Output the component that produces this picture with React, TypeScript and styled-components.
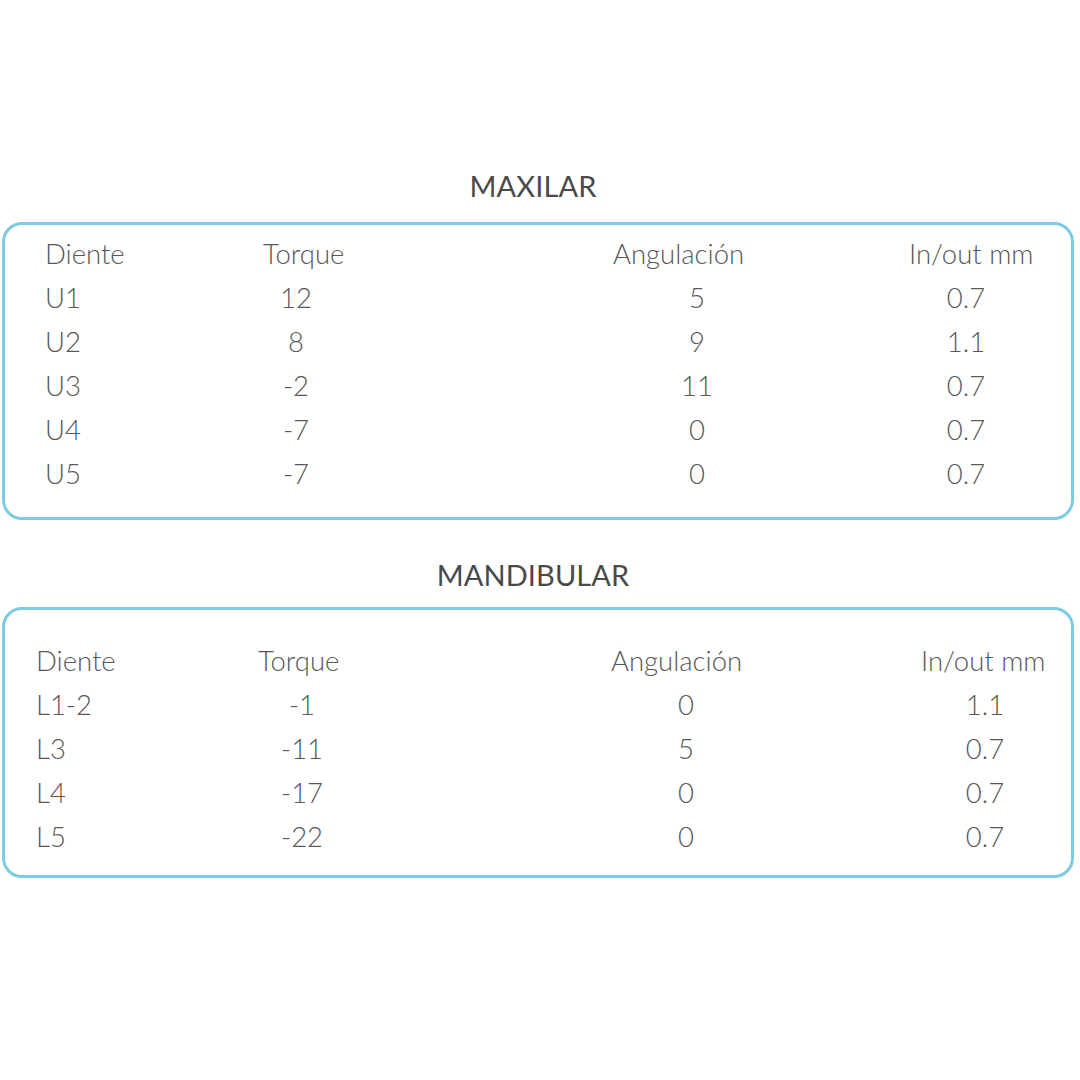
import React from "react";
import styled, { createGlobalStyle } from "styled-components";

const Global = createGlobalStyle`
  html, body { margin: 0; padding: 0; background: #ffffff; }
  body { font-family: Lato, "Open Sans", sans-serif; color: #555555; }
`;

const Page = styled.div`
  width: 1080px;
  height: 1080px;
  box-sizing: border-box;
  padding: 164px 6px 0 2px;
  display: flex;
  flex-direction: column;
`;

const Title = styled.h2<{ $mt: number }>`
  margin: ${(p) => p.$mt}px 10px 0 0;
  height: 44px;
  line-height: 44px;
  text-align: center;
  font-size: 29px;
  font-weight: 400;
  color: #4a4a4a;
  letter-spacing: 0.1px;
`;

const Box = styled.div<{ $pt: number; $pb: number; $h: number; $mt: number }>`
  margin-top: ${(p) => p.$mt}px;
  height: ${(p) => p.$h}px;
  box-sizing: border-box;
  border: 3px solid #7ccbe3;
  border-radius: 20px;
  padding: ${(p) => p.$pt}px 0 ${(p) => p.$pb}px 0;
`;

const Grid = styled.div<{ $cols: string }>`
  display: grid;
  grid-template-columns: ${(p) => p.$cols};
  grid-auto-rows: 44px;
  align-items: center;
  font-size: 27.5px;
  font-weight: 300;
  color: #585858;
`;

const Head = styled.div`
  white-space: nowrap;
`;

const Cell = styled.div<{ $w?: number }>`
  width: ${(p) => (p.$w ? `${p.$w}px` : "auto")};
  text-align: ${(p) => (p.$w ? "center" : "left")};
  white-space: nowrap;
`;

type Table = {
  title: string;
  titleMt: number;
  boxMt: number;
  h: number;
  pt: number;
  pb: number;
  cols: string;
  widths: number[];
  rows: string[][];
};

const tables: Table[] = [
  {
    title: "MAXILAR",
    titleMt: 0,
    boxMt: 14,
    h: 298,
    pt: 6,
    pb: 20,
    cols: "40px 218px 350px 296px 1fr",
    widths: [66, 168, 114],
    rows: [
      ["U1", "12", "5", "0.7"],
      ["U2", "8", "9", "1.1"],
      ["U3", "-2", "11", "0.7"],
      ["U4", "-7", "0", "0.7"],
      ["U5", "-7", "0", "0.7"],
    ],
  },
  {
    title: "MANDIBULAR",
    titleMt: 33,
    boxMt: 10,
    h: 271,
    pt: 28,
    pb: 17,
    cols: "31px 222px 353px 310px 1fr",
    widths: [88, 150, 128],
    rows: [
      ["L1-2", "-1", "0", "1.1"],
      ["L3", "-11", "5", "0.7"],
      ["L4", "-17", "0", "0.7"],
      ["L5", "-22", "0", "0.7"],
    ],
  },
];

const headers = ["Diente", "Torque", "Angulación", "In/out mm"];

export default function App() {
  return (
    <>
      <Global />
      <Page>
        {tables.map((t) => (
          <React.Fragment key={t.title}>
            <Title $mt={t.titleMt}>{t.title}</Title>
            <Box $mt={t.boxMt} $h={t.h} $pt={t.pt} $pb={t.pb}>
              <Grid $cols={t.cols}>
                <span />
                {headers.map((h) => (
                  <Head key={h}>{h}</Head>
                ))}
                {t.rows.map((r) => (
                  <React.Fragment key={r[0]}>
                    <span />
                    <Cell>{r[0]}</Cell>
                    <Cell $w={t.widths[0]}>{r[1]}</Cell>
                    <Cell $w={t.widths[1]}>{r[2]}</Cell>
                    <Cell $w={t.widths[2]}>{r[3]}</Cell>
                  </React.Fragment>
                ))}
              </Grid>
            </Box>
          </React.Fragment>
        ))}
      </Page>
    </>
  );
}
